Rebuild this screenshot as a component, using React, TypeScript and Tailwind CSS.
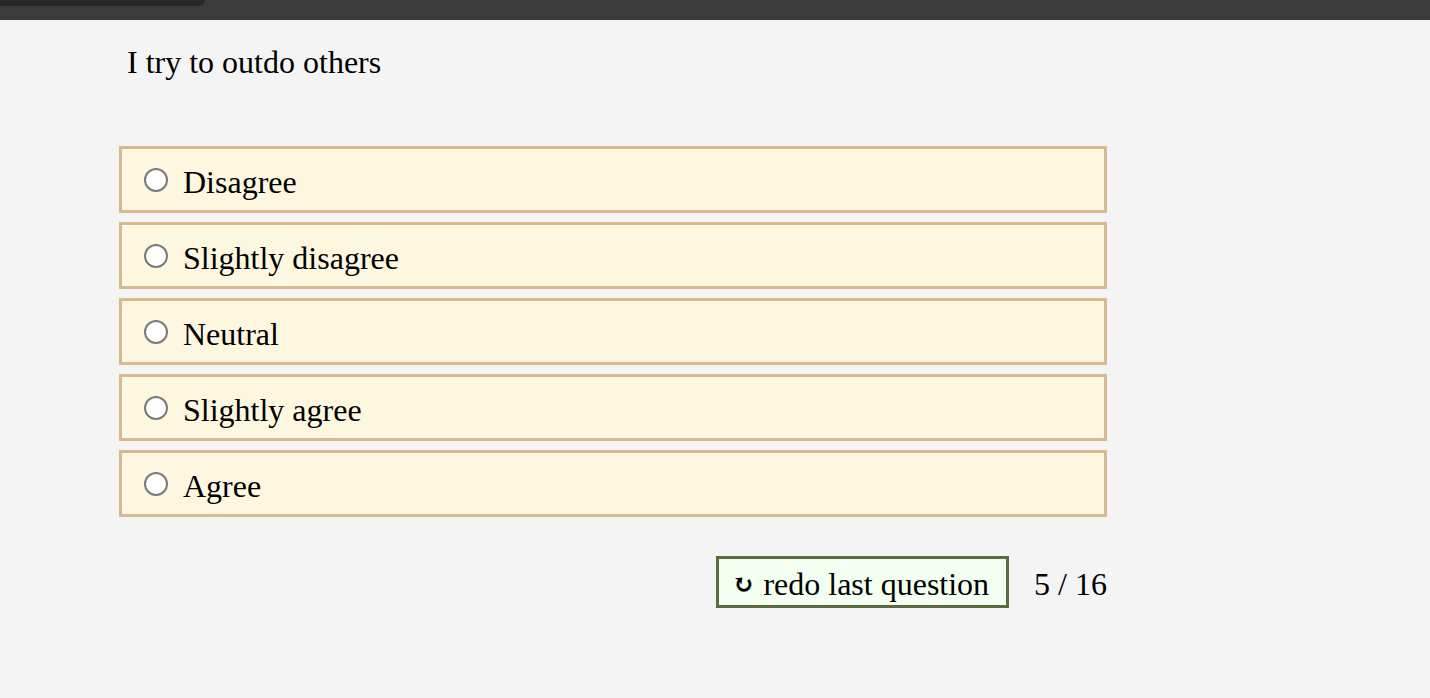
const options = ["Disagree", "Slightly disagree", "Neutral", "Slightly agree", "Agree"];

function TopBar() {
  return (
    <div className="h-5 w-full bg-[#3b3b3b]">
      <div className="h-[6px] w-[205px] rounded-br-[14px] bg-[#282828]" />
    </div>
  );
}

function Option({ label }: { label: string }) {
  return (
    <label className="flex h-[67px] cursor-pointer items-center gap-[15px] border-[3px] border-[#d8ba8e] bg-[#fef7e0] pl-[22px]">
      <span className="block h-6 w-6 rounded-full border-2 border-[#7a7a7a] bg-white" />
      <span className="pt-[4px] text-[32px] leading-none">{label}</span>
    </label>
  );
}

export default function App() {
  return (
    <div className="min-h-[698px] bg-[#f4f4f4] font-['Liberation_Serif',serif] text-black">
      <TopBar />
      <main className="ml-[119px] w-[988px]">
        <h1 className="pt-[22px] pl-2 text-[32px] leading-10 font-normal">I try to outdo others</h1>
        <div className="mt-[64px] flex flex-col gap-[9px]">
          {options.map((o) => (
            <Option key={o} label={o} />
          ))}
        </div>
        <div className="mt-[39px] flex items-center justify-end gap-[25px]">
          <button className="flex h-[52px] items-center gap-[9px] border-[3px] border-[#5b6b3b] bg-[#f3fff0] pr-[17px] pl-[14px] text-[32px] leading-none">
            <span className="pt-[4px] font-['DejaVu_Serif',serif] text-[26px] font-bold">↻</span>
            <span className="pt-[3px]">redo last question</span>
          </button>
          <span className="pt-[3px] text-[32px] leading-none">5 / 16</span>
        </div>
      </main>
    </div>
  );
}
